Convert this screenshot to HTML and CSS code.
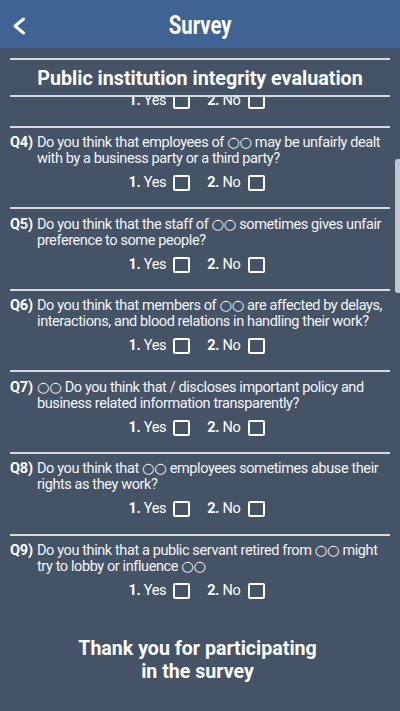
FILE: index.html
```html
<!DOCTYPE html>
<html lang="en">
<head>
<meta charset="utf-8">
<title>Survey</title>
<link rel="stylesheet" href="styles.css">
</head>
<body>
<div class="app">
  <header class="topbar">
    <button class="back" aria-label="Back">
      <svg width="14" height="18" viewBox="0 0 14 18"><path d="M11.5 2 L3 9 L11.5 16" fill="none" stroke="#fff" stroke-width="3" stroke-linecap="round" stroke-linejoin="round"/></svg>
    </button>
    <h1 class="topbar-title"><span>Survey</span></h1>
    <span class="spacer"></span>
  </header>
  <main class="content">
    <div class="section-title">Public institution integrity evaluation</div>
    <div class="scroll">
      <div class="list">
        <div class="options first">
          <span class="opt"><b>1.</b> Yes</span><span class="box"></span>
          <span class="opt second"><b>2.</b> No</span><span class="box"></span>
        </div>
        <div class="question">
          <div class="q-text"><span class="q-num">Q4)</span><span class="q-body">Do you think that employees of ○○ may be unfairly dealt with by a business party or a third party?</span></div>
          <div class="options">
            <span class="opt"><b>1.</b> Yes</span><span class="box"></span>
            <span class="opt second"><b>2.</b> No</span><span class="box"></span>
          </div>
        </div>
        <div class="question">
          <div class="q-text"><span class="q-num">Q5)</span><span class="q-body">Do you think that the staff of ○○ sometimes gives unfair preference to some people?</span></div>
          <div class="options">
            <span class="opt"><b>1.</b> Yes</span><span class="box"></span>
            <span class="opt second"><b>2.</b> No</span><span class="box"></span>
          </div>
        </div>
        <div class="question">
          <div class="q-text"><span class="q-num">Q6)</span><span class="q-body">Do you think that members of ○○ are affected by delays, interactions, and blood relations in handling their work?</span></div>
          <div class="options">
            <span class="opt"><b>1.</b> Yes</span><span class="box"></span>
            <span class="opt second"><b>2.</b> No</span><span class="box"></span>
          </div>
        </div>
        <div class="question">
          <div class="q-text"><span class="q-num">Q7)</span><span class="q-body">○○ Do you think that / discloses important policy and business related information transparently?</span></div>
          <div class="options">
            <span class="opt"><b>1.</b> Yes</span><span class="box"></span>
            <span class="opt second"><b>2.</b> No</span><span class="box"></span>
          </div>
        </div>
        <div class="question">
          <div class="q-text"><span class="q-num">Q8)</span><span class="q-body">Do you think that ○○ employees sometimes abuse their rights as they work?</span></div>
          <div class="options">
            <span class="opt"><b>1.</b> Yes</span><span class="box"></span>
            <span class="opt second"><b>2.</b> No</span><span class="box"></span>
          </div>
        </div>
        <div class="question">
          <div class="q-text"><span class="q-num">Q9)</span><span class="q-body">Do you think that a public servant retired from ○○ might try to lobby or influence ○○</span></div>
          <div class="options">
            <span class="opt"><b>1.</b> Yes</span><span class="box"></span>
            <span class="opt second"><b>2.</b> No</span><span class="box"></span>
          </div>
        </div>
        <p class="thanks">Thank you for participating<br>in the survey</p>
      </div>
      <div class="scroll-indicator"></div>
    </div>
  </main>
</div>
</body>
</html>
```
FILE: styles.css
```css
* { box-sizing: border-box; }
html, body { margin: 0; padding: 0; }
body {
  width: 400px;
  height: 711px;
  overflow: hidden;
  font-family: Roboto, "DejaVu Sans", sans-serif;
  color: #fff;
  background: #445366;
}
.app {
  display: flex;
  flex-direction: column;
  height: 711px;
}
.topbar {
  height: 48px;
  flex: none;
  background: #406396;
  display: grid;
  grid-template-columns: 48px 1fr 48px;
  align-items: center;
}
.back {
  border: 0;
  background: none;
  padding: 0 0 0 12px;
  height: 48px;
  display: flex;
  align-items: center;
  cursor: pointer;
}
.back svg { display: block; margin-top: 4px; }
.topbar-title {
  margin: 0;
  text-align: center;
  font-size: 26px;
  font-weight: 700;
  line-height: 48px;
}
.topbar-title span {
  display: inline-block;
  transform: scaleX(0.78);
  position: relative;
  top: 1px;
}
.content {
  flex: 1;
  display: flex;
  flex-direction: column;
  min-height: 0;
  background: #445366;
}
.section-title {
  flex: none;
  margin: 10px 10px 0;
  border-top: 2px solid #d6dadf;
  border-bottom: 2px solid #d6dadf;
  padding: 6.5px 0 4.5px;
  font-size: 19.7px;
  font-weight: 700;
  line-height: 24px;
  text-align: center;
}
.scroll {
  flex: 1;
  overflow: hidden;
  position: relative;
}
.list {
  padding: 0 10px;
}
.question {
  border-top: 2px solid #d6dadf;
  padding: 7.3px 0 14.3px;
}
.q-text {
  display: flex;
  font-size: 14.5px;
  letter-spacing: -0.4px;
  line-height: 16px;
  color: #f4f5f6;
}
.q-num {
  flex: none;
  width: 27px;
  font-weight: 700;
  letter-spacing: -0.2px;
  color: #fff;
}
.q-body { flex: 1; }
.options {
  display: flex;
  justify-content: center;
  align-items: center;
  height: 20px;
  margin-top: 6px;
  padding-right: 7px;
  font-size: 14.5px;
  letter-spacing: -0.3px;
  line-height: 20px;
}
.options.first {
  margin-top: -5.6px;
  margin-bottom: 14.3px;
}
.opt b { font-weight: 700; }
.opt.second { margin-left: 17px; }
.box {
  width: 17px;
  height: 16px;
  margin-left: 7px;
  border: 2px solid #fff;
  border-radius: 2px;
}
.thanks {
  margin: 22px 0 0;
  padding-right: 5px;
  text-align: center;
  font-size: 19.6px;
  font-weight: 700;
  line-height: 23px;
}
.scroll-indicator {
  position: absolute;
  right: 0;
  top: 62px;
  width: 5px;
  height: 134px;
  background: #c3c8ce;
  border-radius: 3px 0 0 3px;
}
```
